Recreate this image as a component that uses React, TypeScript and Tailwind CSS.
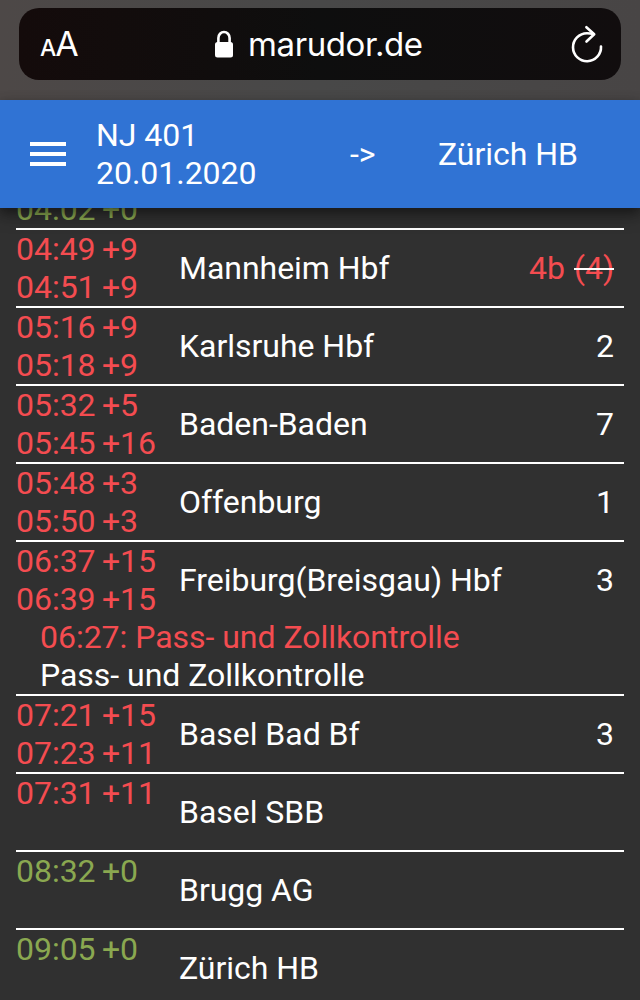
import clsx from "clsx";

type Stop = {
  name: string;
  arrival?: string;
  departure?: string;
  onTime?: boolean;
  platform?: string;
  oldPlatform?: string;
  messages?: { text: string; delay?: boolean }[];
};

const STOPS: Stop[] = [
  {
    name: "Mannheim Hbf",
    arrival: "04:49 +9",
    departure: "04:51 +9",
    platform: "4b",
    oldPlatform: "(4)",
  },
  { name: "Karlsruhe Hbf", arrival: "05:16 +9", departure: "05:18 +9", platform: "2" },
  { name: "Baden-Baden", arrival: "05:32 +5", departure: "05:45 +16", platform: "7" },
  { name: "Offenburg", arrival: "05:48 +3", departure: "05:50 +3", platform: "1" },
  {
    name: "Freiburg(Breisgau) Hbf",
    arrival: "06:37 +15",
    departure: "06:39 +15",
    platform: "3",
    messages: [
      { text: "06:27: Pass- und Zollkontrolle", delay: true },
      { text: "Pass- und Zollkontrolle" },
    ],
  },
  { name: "Basel Bad Bf", arrival: "07:21 +15", departure: "07:23 +11", platform: "3" },
  { name: "Basel SBB", arrival: "07:31 +11" },
  { name: "Brugg AG", arrival: "08:32 +0", onTime: true },
  { name: "Zürich HB", arrival: "09:05 +0", onTime: true },
];

function AddressBar() {
  return (
    <div className="h-[100px] shrink-0 bg-[#484646] bg-linear-to-r from-[#4d4847] via-[#484848] to-[#484545] px-[19px] pt-2">
      <div className="flex h-[72px] items-center rounded-[20px] bg-[#0f0d0e] bg-linear-to-r from-[#140b0b] via-[#0e0e0e] to-[#110d0e] pr-4 pl-[21px] font-[Inter,sans-serif] text-white">
        <div className="flex w-[60px] items-baseline leading-none">
          <span className="text-[23px] font-medium">A</span>
          <span className="-ml-px text-[34px]">A</span>
        </div>
        <div className="flex flex-1 items-center pl-[114px]">
          <svg className="mr-3.5 h-7 w-5" viewBox="0 0 20 28" fill="none">
            <rect x="1" y="12" width="18" height="15.5" rx="2.5" fill="white" />
            <path d="M4.4 13V8a5.6 6 0 0 1 11.2 0v5" stroke="white" strokeWidth="2.6" />
          </svg>
          <span className="text-[33px] leading-none tracking-[-0.4px]">marudor.de</span>
        </div>
        <svg
          className="h-10 w-9"
          viewBox="0 0 36 40"
          fill="none"
          stroke="white"
          strokeWidth="2.6"
          strokeLinecap="round"
          strokeLinejoin="round"
        >
          <path d="M32 22.5A14 14 0 1 1 18 9.2q3.5 0 6 .8" />
          <path d="M17.4 3.2 25.2 10.3l-7.7 7.2" />
        </svg>
      </div>
    </div>
  );
}

function Header() {
  return (
    <header className="relative z-10 flex h-[108px] shrink-0 items-center bg-[#3073d4] pl-[30px] shadow-[0_4px_10px_rgba(0,0,0,0.35),0_8px_16px_rgba(0,0,0,0.25)]">
      <div className="flex w-9 flex-col gap-1.5">
        <span className="h-1 bg-white" />
        <span className="h-1 bg-white" />
        <span className="h-1 bg-white" />
      </div>
      <div className="ml-[30px] w-[254px]">
        <div>NJ 401</div>
        <div>20.01.2020</div>
      </div>
      <span className="w-[88px]">-&gt;</span>
      <span>Zürich HB</span>
    </header>
  );
}

function StopRow({ stop }: { stop: Stop }) {
  return (
    <li className="border-t-2 border-white">
      <div className="flex h-[76px]">
        <div
          className={clsx(
            "w-[163px] [word-spacing:-1.5px]",
            stop.onTime ? "text-[#8aa850]" : "text-[#f44c50]"
          )}
        >
          <div>{stop.arrival}</div>
          <div>{stop.departure}</div>
        </div>
        <div className="flex flex-1 items-center pr-2.5">
          <span className="flex-1">{stop.name}</span>
          {stop.oldPlatform ? (
            <span>
              <span className="mr-[9px] text-[#f44c50]">{stop.platform}</span>
              <span className="line-through decoration-white decoration-2">
                <span className="text-[#f44c50]">{stop.oldPlatform}</span>
              </span>
            </span>
          ) : (
            <span>{stop.platform}</span>
          )}
        </div>
      </div>
      {stop.messages?.map((m) => (
        <div key={m.text} className={clsx("pl-6", m.delay && "text-[#f44c50]")}>
          {m.text}
        </div>
      ))}
    </li>
  );
}

export default function App() {
  return (
    <div className="flex h-[1000px] w-[640px] flex-col overflow-hidden bg-[#303030] font-[Roboto,sans-serif] text-[32px] leading-[38px] tracking-[-0.03px] text-white">
      <AddressBar />
      <Header />
      {/* the list is scrolled a little way under the header */}
      <main className="-mt-[18px] px-4">
        <div className="text-[#8aa850] [word-spacing:-1.5px]">04:02 +0</div>
        <ul>
          {STOPS.map((stop) => (
            <StopRow key={stop.name} stop={stop} />
          ))}
        </ul>
      </main>
    </div>
  );
}
